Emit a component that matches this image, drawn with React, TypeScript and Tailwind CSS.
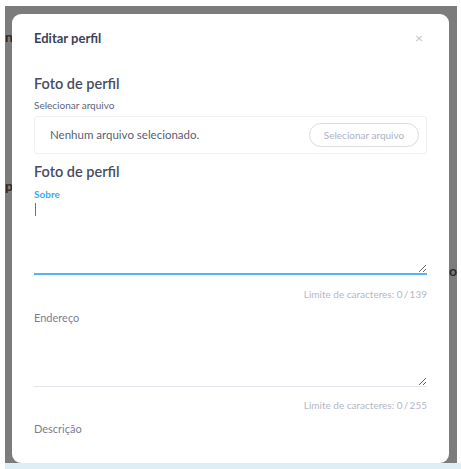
import React from 'react';

const font = { fontFamily: 'Lato, "Open Sans", sans-serif' };

function Counter({ max }: { max: number }) {
  return (
    <div className="text-right text-[10px] leading-[14px] text-[#b4b8c4]">
      Limite de caracteres: 0&thinsp;/&thinsp;{max}
    </div>
  );
}

function Area({ active, height }: { active?: boolean; height: string }) {
  return (
    <div className="relative">
      <textarea
        readOnly
        className={`block w-full ${height} resize-y bg-transparent outline-none border-0 border-b ${
          active ? 'border-b-2 border-[#53b4f7]' : 'border-[#e3e5ea]'
        }`}
      />
      {active && <span className="absolute left-[1px] top-[2px] h-[13px] w-[1px] bg-[#6b7180]" />}
    </div>
  );
}

export default function App() {
  return (
    <div className="relative h-[469px] w-[461px] overflow-hidden bg-white" style={font}>
      {/* backdrop with page behind */}
      <div className="absolute left-[5px] top-[6px] right-[4px] bottom-0 bg-[#7c7c7c]">
        <div className="mt-[20px] text-[14px] font-bold text-[#2a2a2a]">n</div>
        <div className="mt-[128px] text-[14px] font-bold text-[#2a2a2a]">p</div>
        <div className="absolute right-0 top-[254px] text-[14px] font-bold text-[#2a2a2a]">lo</div>
      </div>
      <div className="absolute left-[5px] right-0 bottom-0 h-[6px] bg-[#dfeef4]" />

      {/* modal */}
      <div className="absolute left-[12px] top-[14px] w-[437px] h-[449px] rounded-[9px] bg-white px-[22px] pt-[14px]">
        <div className="flex items-center justify-between">
          <h2 className="text-[13px] leading-[20px] font-bold text-[#3c4259]">Editar perfil</h2>
          <span className="mr-[4px] text-[14px] leading-[20px] text-[#c3c6ce]">×</span>
        </div>

        <div className="mt-[26px] text-[14.5px] leading-[20px] font-semibold text-[#474d63]">Foto de perfil</div>
        <div className="mt-[4px] text-[10px] leading-[14px] text-[#5f6577]">Selecionar arquivo</div>
        <div className="mt-[4px] flex h-[38px] items-center justify-between rounded-[3px] border border-[#eef0f3] pl-[15px] pr-[7px]">
          <span className="text-[11.5px] text-[#5a6074]">Nenhum arquivo selecionado.</span>
          <span className="flex h-[24px] w-[110px] items-center justify-center rounded-full border border-[#d9dce4] text-[10px] text-[#adb2c0]">
            Selecionar arquivo
          </span>
        </div>

        <div className="mt-[8px] text-[14.5px] leading-[20px] font-semibold text-[#474d63]">Foto de perfil</div>
        <div className="mt-[5px] text-[10px] leading-[14px] font-bold text-[#3da8f5]">Sobre</div>
        <Area active height="h-[74px]" />
        <div className="mt-[12px]">
          <Counter max={139} />
        </div>

        <div className="mt-[9px] text-[11px] leading-[16px] text-[#7b8093]">Endereço</div>
        <Area height="h-[61px]" />
        <div className="mt-[11px]">
          <Counter max={255} />
        </div>

        <div className="mt-[9px] text-[11px] leading-[16px] text-[#7b8093]">Descrição</div>
      </div>
    </div>
  );
}
